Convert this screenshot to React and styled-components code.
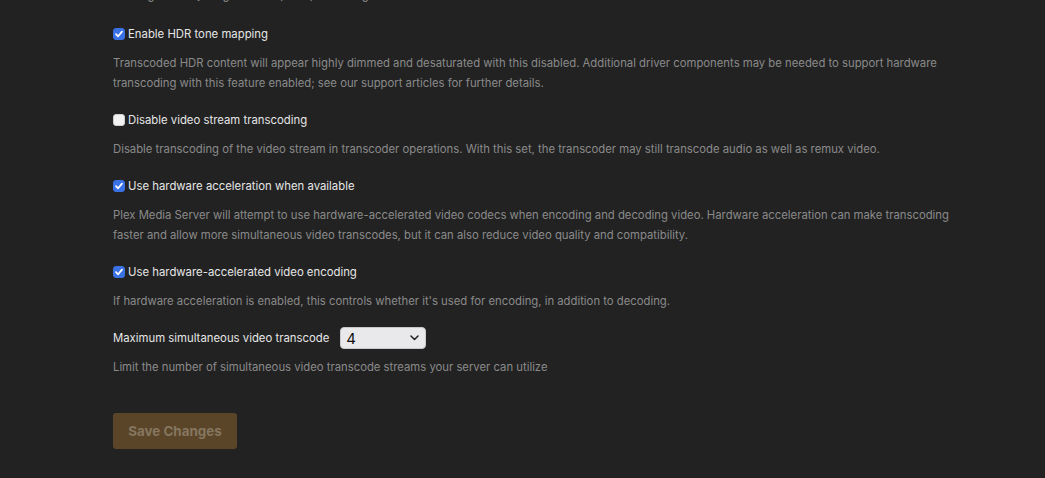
import styled, { createGlobalStyle } from "styled-components";

const GlobalStyle = createGlobalStyle`
  html, body {
    margin: 0;
    background: #222222;
  }
  body {
    font-family: Inter, "Open Sans", sans-serif;
    -webkit-font-smoothing: antialiased;
  }
`;

const settings = [
  {
    id: "hdr",
    label: "Enable HDR tone mapping",
    checked: true,
    help: [
      "Transcoded HDR content will appear highly dimmed and desaturated with this disabled. Additional driver components may be needed to support hardware",
      "transcoding with this feature enabled; see our support articles for further details.",
    ],
  },
  {
    id: "disableVideo",
    label: "Disable video stream transcoding",
    checked: false,
    help: [
      "Disable transcoding of the video stream in transcoder operations. With this set, the transcoder may still transcode audio as well as remux video.",
    ],
  },
  {
    id: "hwAccel",
    label: "Use hardware acceleration when available",
    checked: true,
    help: [
      "Plex Media Server will attempt to use hardware-accelerated video codecs when encoding and decoding video. Hardware acceleration can make transcoding",
      "faster and allow more simultaneous video transcodes, but it can also reduce video quality and compatibility.",
    ],
  },
  {
    id: "hwEncode",
    label: "Use hardware-accelerated video encoding",
    checked: true,
    help: [
      "If hardware acceleration is enabled, this controls whether it's used for encoding, in addition to decoding.",
    ],
  },
];

const Check = ({ checked }) => (
  <Box checked={checked}>
    {checked && (
      <svg width="10" height="10" viewBox="0 0 10 10">
        <path d="M2 5.2 L4.1 7.3 L8 2.6" fill="none" stroke="#fff" strokeWidth="1.7" strokeLinecap="round" strokeLinejoin="round" />
      </svg>
    )}
  </Box>
);

const App = () => {
  return (
    <>
      <GlobalStyle />
      <Page>
        <Form>
          <Help spaced>take significantly longer to complete processing.</Help>
          {settings.map((s) => (
            <Group key={s.id}>
              <CheckRow>
                <Check checked={s.checked} />
                <Label>{s.label}</Label>
              </CheckRow>
              <Help>
                {s.help.map((line) => (
                  <Line key={line}>{line}</Line>
                ))}
              </Help>
            </Group>
          ))}
          <Group>
            <SelectRow>
              <Label>Maximum simultaneous video transcode</Label>
              <Select>
                <span>4</span>
                <svg width="9" height="6" viewBox="0 0 9 6">
                  <path d="M1 1 L4.5 4.5 L8 1" fill="none" stroke="#222" strokeWidth="1.5" strokeLinecap="round" strokeLinejoin="round" />
                </svg>
              </Select>
            </SelectRow>
            <Help tight>Limit the number of simultaneous video transcode streams your server can utilize</Help>
          </Group>
          <SaveButton>Save Changes</SaveButton>
        </Form>
      </Page>
    </>
  );
};

const Page = styled.div`
  width: 1045px;
  height: 478px;
  overflow: hidden;
  background: #222222;
`;

const Form = styled.div`
  display: flex;
  flex-direction: column;
  padding-left: 113px;
  width: 900px;
  margin-top: -15px;
`;

const Group = styled.div`
  display: flex;
  flex-direction: column;
  margin-bottom: 17px;
`;

const CheckRow = styled.label`
  display: flex;
  align-items: center;
  gap: 3px;
  height: 20px;
  margin-bottom: 9px;
`;

const Box = styled.span`
  width: 12px;
  height: 12px;
  box-sizing: border-box;
  border-radius: 3px;
  display: flex;
  align-items: center;
  justify-content: center;
  background: ${(p) => (p.checked ? "#3a72e6" : "#f2f2f2")};
  border: 1px solid ${(p) => (p.checked ? "#3a72e6" : "#cfcfcf")};
`;

const Label = styled.span`
  font-size: 11.35px;
  line-height: 20px;
  color: #e6e6e6;
`;

const Help = styled.div`
  font-size: 11.3px;
  line-height: 20px;
  color: #8a8a8a;
  margin-top: ${(p) => (p.tight ? "8px" : "0")};
  margin-bottom: ${(p) => (p.spaced ? "19px" : "0")};
`;

const Line = styled.div`
  white-space: nowrap;
`;

const SelectRow = styled.div`
  display: flex;
  align-items: center;
  gap: 11px;
  height: 22px;
  margin-top: -1px;
`;

const Select = styled.div`
  width: 86px;
  height: 22px;
  box-sizing: border-box;
  border-radius: 4px;
  background: #e9e9ec;
  border: 1px solid #c9c9cc;
  display: flex;
  align-items: center;
  justify-content: space-between;
  padding: 0 6px 0 5px;
  font-size: 15px;
  color: #111;
`;

const SaveButton = styled.button`
  align-self: flex-start;
  margin-top: 19px;
  width: 124px;
  height: 36px;
  border: none;
  border-radius: 3px;
  background: #5a4529;
  color: #85765f;
  font-family: Inter, "Open Sans", sans-serif;
  font-weight: 700;
  font-size: 13.4px;
  cursor: default;
`;

export default App;
